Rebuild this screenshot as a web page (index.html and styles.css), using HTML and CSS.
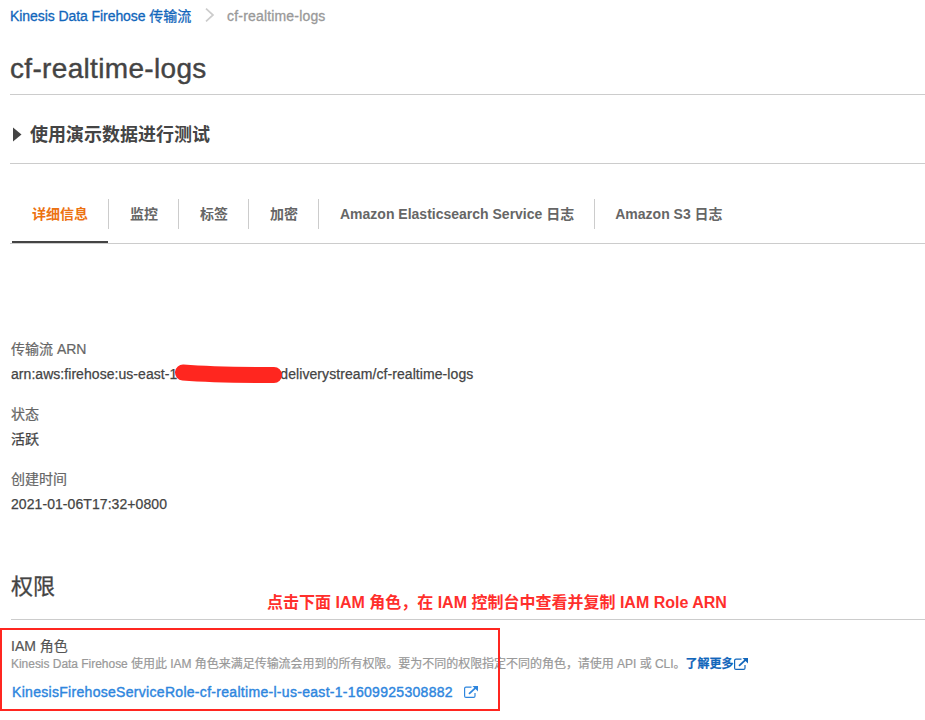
FILE: index.html
```html
<!DOCTYPE html>
<html lang="zh-CN">
<head>
<meta charset="utf-8">
<title>cf-realtime-logs</title>
<link rel="stylesheet" href="styles.css">
</head>
<body>
<svg width="0" height="0" class="defs"><symbol id="ext" viewBox="0 0 14 12"><path d="M7.500 1.100H2Q.6 1.100.6 2.500v7.400q0 1.500 1.400 1.500h7.600q1.400 0 1.400-1.500V7" fill="none" stroke="currentColor" stroke-width="1.200"/><path d="M8.500 0H14v5.500z" fill="currentColor"/><path d="m5 7.900 6.500-6" stroke="currentColor" stroke-width="1.800"/></symbol></svg>
<main class="page">
  <nav class="breadcrumb">
    <a class="crumb-link">Kinesis Data Firehose 传输流</a>
    <svg class="chevron" viewBox="0 0 10 14"><path d="m1 .7 7 6.300-7 6.300" fill="none" stroke="#ccc" stroke-width="1.700"/></svg>
    <span class="crumb-current">cf-realtime-logs</span>
  </nav>
  <h1 class="title">cf-realtime-logs</h1>
  <section class="demo">
    <svg class="triangle" viewBox="0 0 9 15"><path d="M0 .5V14.500L8.500 7.500z" fill="#444"/></svg>
    <h2>使用演示数据进行测试</h2>
  </section>
  <div class="tabs">
    <div class="tab active"><span>详细信息</span></div>
    <div class="tab"><span>监控</span></div>
    <div class="tab"><span>标签</span></div>
    <div class="tab"><span>加密</span></div>
    <div class="tab"><span>Amazon Elasticsearch Service 日志</span></div>
    <div class="tab"><span>Amazon S3 日志</span></div>
  </div>
  <dl class="details">
    <dt>传输流 ARN</dt>
    <dd class="arn"><span class="arn-start">arn:aws:firehose:us-east-1</span><span class="redacted"><svg class="scribble" viewBox="0 0 108 20"><path d="M9 8.500Q40 11 100 11" fill="none" stroke="#ff261f" stroke-width="16" stroke-linecap="round"/></svg></span><span class="arn-end">deliverystream/cf-realtime-logs</span></dd>
    <dt>状态</dt>
    <dd>活跃</dd>
    <dt>创建时间</dt>
    <dd><span class="date">2021-01-06T17:32+0800</span></dd>
  </dl>
  <section class="permissions">
    <h2>权限</h2>
    <div class="role-label">IAM 角色</div>
    <div class="hint"><span class="hint-text">Kinesis Data Firehose 使用此 IAM 角色来满足传输流会用到的所有权限。要为不同的权限指定不同的角色，请使用 API 或 CLI。</span><a class="more">了解更多<svg class="ext"><use href="#ext"/></svg></a></div>
    <a class="role"><span class="role-name">KinesisFirehoseServiceRole-cf-realtime-l-us-east-1-1609925308882</span><svg class="ext"><use href="#ext"/></svg></a>
  </section>
</main>
<div class="note">点击下面 IAM 角色，在 IAM 控制台中查看并复制 IAM Role ARN</div>
<div class="frame"></div>
</body>
</html>
```
FILE: styles.css
```css
* { box-sizing: border-box; }
body {
  margin: 0;
  position: relative;
  height: 720px;
  overflow: hidden;
  background: #fff;
  color: #444;
  font: 14px/20px "Liberation Sans", "Noto Sans CJK SC", sans-serif;
  white-space: nowrap;
}
h1, h2, dl, dd { margin: 0; }
svg { flex: none; }
.defs { position: absolute; }
.page { padding-left: 10px; }

.breadcrumb { display: flex; align-items: center; height: 32px; color: #999; -webkit-text-stroke: .3px; }
.crumb-link { color: #1166bb; letter-spacing: -.07px; }
.crumb-current { letter-spacing: .17px; }
.chevron { width: 10px; height: 14px; margin: 0 12px 2px 14px; }
.title {
  height: 63px;
  padding-top: 19px;
  border-bottom: 1px solid #ccc;
  font-size: 28px;
  line-height: 36px;
  font-weight: 400;
  letter-spacing: .33px;
  -webkit-text-stroke: .4px;
}
.demo { display: flex; align-items: center; height: 69px; padding: 11px 0 0 3px; border-bottom: 1px solid #ccc; }
.demo h2 { margin-left: 8px; font-size: 18px; line-height: 24px; }
.triangle { width: 9px; height: 15px; margin-bottom: 1px; }

.tabs { display: flex; height: 80px; padding: 35px 0 0 2px; border-bottom: 1px solid #ccc; color: #666; font-weight: 700; }
.tab { height: 30px; padding: 0 20px 0 21px; border-right: 1px solid #ccc; line-height: 30px; }
.tab span { display: block; }
.tab:last-child { border: 0; padding-left: 20px; }
.active { position: relative; padding-left: 20px; color: #ec7211; }
.active::after { content: ""; position: absolute; left: 0; right: 0; top: 42px; height: 2px; background: #444; }

.details { padding: 93px 0 0 1px; }
.details dt { height: 25px; line-height: 25px; color: #666; -webkit-text-stroke: .2px; }
.details dd { height: 25px; margin-bottom: 15px; line-height: 25px; -webkit-text-stroke: .25px; }
.arn { display: flex; }
.arn-start { letter-spacing: .05px; }
.arn-end { letter-spacing: .08px; }
.date { letter-spacing: .07px; }
.redacted { width: 103px; }
.scribble { display: block; width: 108px; height: 20px; margin: 2px 0 0 -3px; position: relative; z-index: 1; }

.permissions { padding: 37px 0 0 1px; }
.permissions h2 { height: 51px; border-bottom: 1px solid #ccc; font-size: 22px; line-height: 36px; font-weight: 400; -webkit-text-stroke: .3px; }
.role-label { height: 36px; padding-top: 16px; color: #555; -webkit-text-stroke: .2px; }
.hint { display: flex; height: 16px; font-size: 12px; line-height: 16px; color: #999; -webkit-text-stroke: .2px; }
.hint-text { letter-spacing: -.03px; }
.more { display: flex; align-items: center; color: #1166bb; font-weight: 700; }
.ext { width: 14px; height: 12px; }
.more .ext { margin-left: 1px; }
.role { display: flex; align-items: center; height: 40px; padding-left: 1px; color: #2e86de; -webkit-text-stroke: .4px; }
.role-name { letter-spacing: .3px; }
.role .ext { margin-left: 11px; }

.note { position: absolute; left: 267px; top: 593px; font-size: 16px; font-weight: 700; color: #ff2f2c; }
.frame { position: absolute; left: 0; top: 628px; width: 500px; height: 83px; border: 2px solid #ff2620; }
```
